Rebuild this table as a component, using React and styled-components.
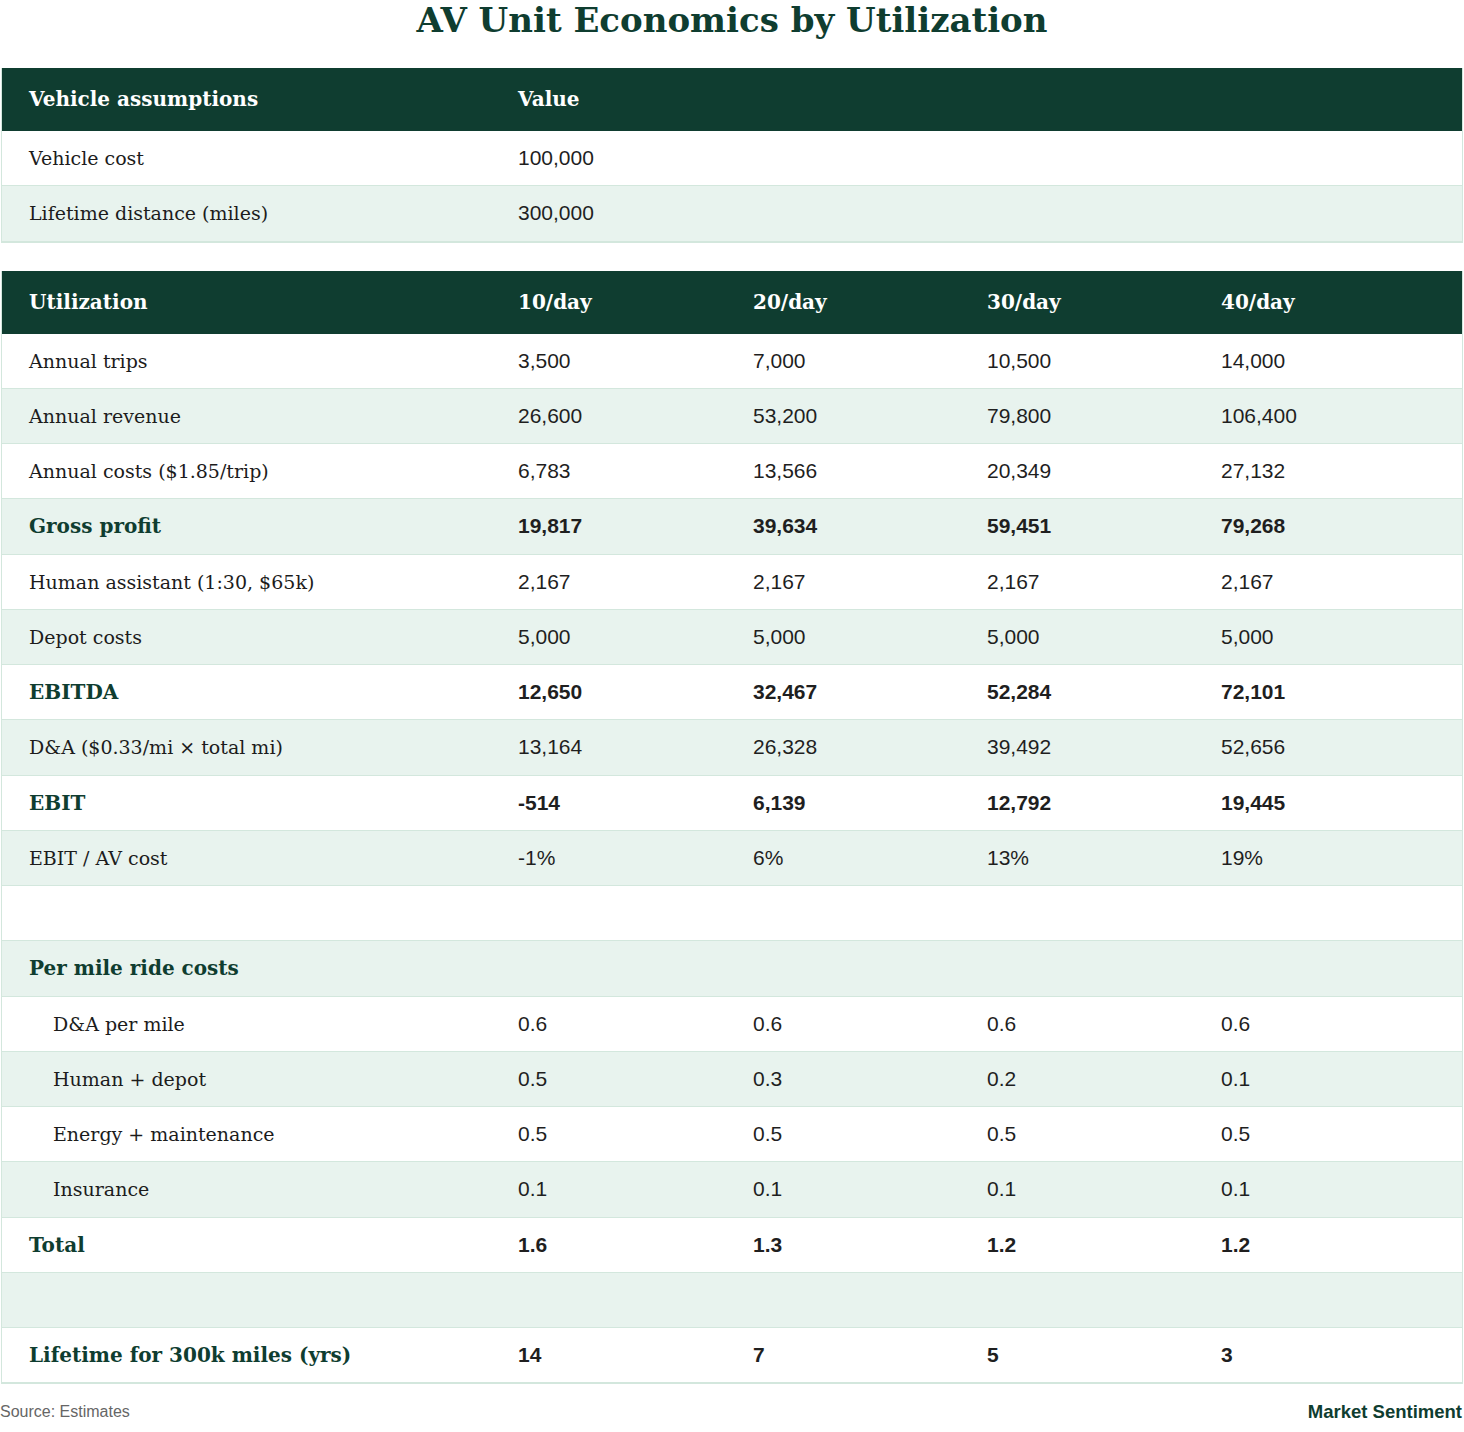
import React from 'react';
import styled, { createGlobalStyle } from 'styled-components';

const GlobalStyle = createGlobalStyle`
  html, body {
    margin: 0;
    padding: 0;
    background: #fff;
  }
  * {
    box-sizing: border-box;
  }
`;

const green = '#0f3d30';
const tint = '#e8f3ee';
const line = '#d3e7dd';

const Page = styled.div`
  width: 1464px;
  padding: 0 1px;
  font-family: 'DejaVu Serif', 'Liberation Serif', serif;
`;

const Title = styled.h1`
  margin: 0 0 28px;
  height: 40px;
  line-height: 40px;
  text-align: center;
  font-size: 34px;
  font-weight: 700;
  color: ${green};
`;

const Table = styled.div`
  border: 1px solid ${line};
  border-top: none;
  margin-bottom: ${p => p.$gap || 0}px;
`;

const Row = styled.div`
  display: grid;
  grid-template-columns: 489px 235px 234px 234px 1fr;
  align-items: center;
  height: ${p => (p.$head ? 63 : 55.26)}px;
  background: ${p => (p.$head ? green : p.$alt ? tint : '#fff')};
  border-bottom: 1px solid ${p => (p.$head ? green : line)};
`;

const Label = styled.div`
  padding-left: ${p => (p.$indent ? 51 : 27)}px;
  font-size: ${p => (p.$bold ? 20 : 19)}px;
  font-weight: ${p => (p.$bold ? 700 : 400)};
  color: ${p => (p.$bold ? green : '#1c1c1c')};
  white-space: nowrap;
`;

const HeadCell = styled.div`
  padding-left: 27px;
  font-size: 20px;
  font-weight: 700;
  color: #fff;
  white-space: nowrap;
`;

const Cell = styled.div`
  padding-left: 27px;
  font-family: 'Liberation Sans', Arial, sans-serif;
  font-size: 21px;
  font-weight: ${p => (p.$bold ? 700 : 400)};
  color: #1f1f1f;
`;

const Footer = styled.div`
  display: flex;
  justify-content: space-between;
  align-items: center;
  height: 56px;
  margin: 0 -1px;
  font-family: 'Liberation Sans', Arial, sans-serif;
`;

const Source = styled.span`
  font-size: 16px;
  color: #666;
`;

const Brand = styled.span`
  font-size: 18.5px;
  font-weight: 700;
  color: ${green};
  padding-right: 2px;
`;

const assumptions = [
  ['Vehicle cost', '100,000'],
  ['Lifetime distance (miles)', '300,000'],
];

const rows = [
  { label: 'Annual trips', vals: ['3,500', '7,000', '10,500', '14,000'] },
  { label: 'Annual revenue', vals: ['26,600', '53,200', '79,800', '106,400'] },
  { label: 'Annual costs ($1.85/trip)', vals: ['6,783', '13,566', '20,349', '27,132'] },
  { label: 'Gross profit', vals: ['19,817', '39,634', '59,451', '79,268'], bold: true },
  { label: 'Human assistant (1:30, $65k)', vals: ['2,167', '2,167', '2,167', '2,167'] },
  { label: 'Depot costs', vals: ['5,000', '5,000', '5,000', '5,000'] },
  { label: 'EBITDA', vals: ['12,650', '32,467', '52,284', '72,101'], bold: true },
  { label: 'D&A ($0.33/mi × total mi)', vals: ['13,164', '26,328', '39,492', '52,656'] },
  { label: 'EBIT', vals: ['-514', '6,139', '12,792', '19,445'], bold: true },
  { label: 'EBIT / AV cost', vals: ['-1%', '6%', '13%', '19%'] },
  { label: '', vals: [] },
  { label: 'Per mile ride costs', vals: [], bold: true },
  { label: 'D&A per mile', vals: ['0.6', '0.6', '0.6', '0.6'], indent: true },
  { label: 'Human + depot', vals: ['0.5', '0.3', '0.2', '0.1'], indent: true },
  { label: 'Energy + maintenance', vals: ['0.5', '0.5', '0.5', '0.5'], indent: true },
  { label: 'Insurance', vals: ['0.1', '0.1', '0.1', '0.1'], indent: true },
  { label: 'Total', vals: ['1.6', '1.3', '1.2', '1.2'], bold: true },
  { label: '', vals: [] },
  { label: 'Lifetime for 300k miles (yrs)', vals: ['14', '7', '5', '3'], bold: true },
];

export default function App() {
  return (
    <Page>
      <GlobalStyle />
      <Title>AV Unit Economics by Utilization</Title>

      <Table $gap={28}>
        <Row $head>
          <HeadCell>Vehicle assumptions</HeadCell>
          <HeadCell>Value</HeadCell>
        </Row>
        {assumptions.map(([label, val], i) => (
          <Row key={label} $alt={i % 2 === 1}>
            <Label>{label}</Label>
            <Cell>{val}</Cell>
          </Row>
        ))}
      </Table>

      <Table>
        <Row $head>
          <HeadCell>Utilization</HeadCell>
          <HeadCell>10/day</HeadCell>
          <HeadCell>20/day</HeadCell>
          <HeadCell>30/day</HeadCell>
          <HeadCell>40/day</HeadCell>
        </Row>
        {rows.map((r, i) => (
          <Row key={i} $alt={i % 2 === 1}>
            <Label $bold={r.bold} $indent={r.indent}>{r.label}</Label>
            {r.vals.map((v, j) => (
              <Cell key={j} $bold={r.bold}>{v}</Cell>
            ))}
          </Row>
        ))}
      </Table>

      <Footer>
        <Source>Source: Estimates</Source>
        <Brand>Market Sentiment</Brand>
      </Footer>
    </Page>
  );
}
